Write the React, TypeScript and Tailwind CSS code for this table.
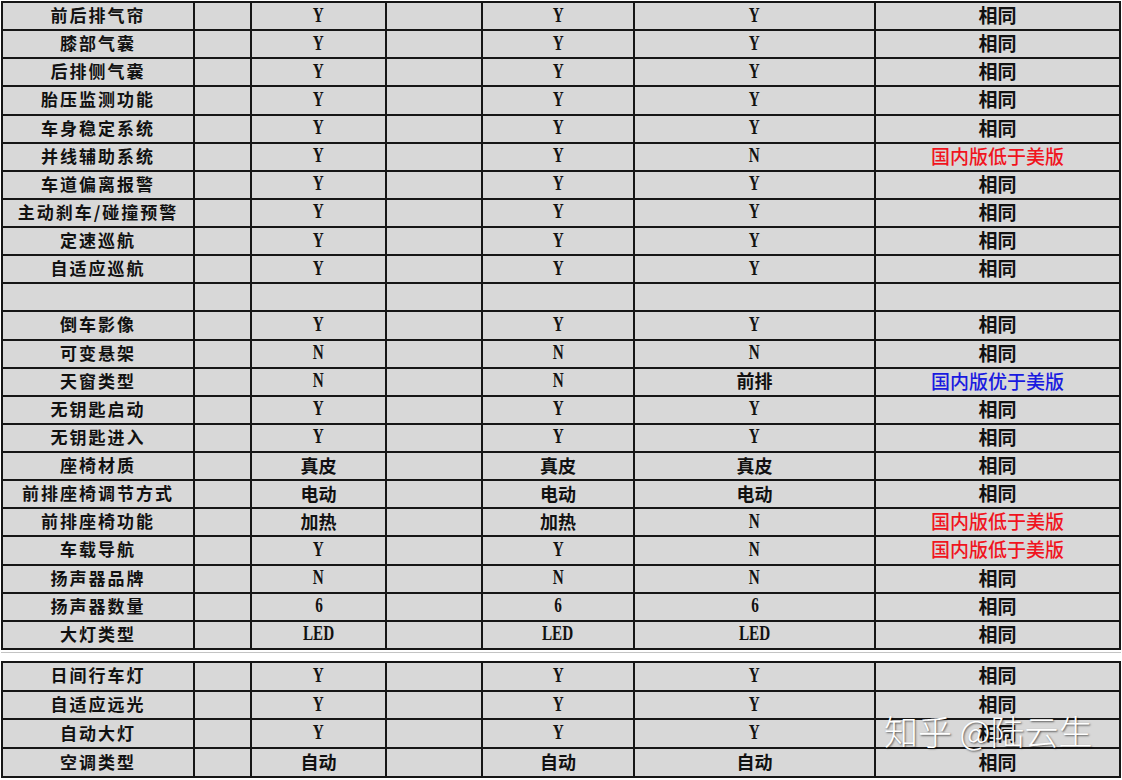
type Row = {
  label: string;
  a: string;
  b: string;
  c: string;
  result: string;
};

const SAME = "相同";
const LOWER = "国内版低于美版";
const HIGHER = "国内版优于美版";

const topRows: (Row | null)[] = [
  { label: "前后排气帘", a: "Y", b: "Y", c: "Y", result: SAME },
  { label: "膝部气囊", a: "Y", b: "Y", c: "Y", result: SAME },
  { label: "后排侧气囊", a: "Y", b: "Y", c: "Y", result: SAME },
  { label: "胎压监测功能", a: "Y", b: "Y", c: "Y", result: SAME },
  { label: "车身稳定系统", a: "Y", b: "Y", c: "Y", result: SAME },
  { label: "并线辅助系统", a: "Y", b: "Y", c: "N", result: LOWER },
  { label: "车道偏离报警", a: "Y", b: "Y", c: "Y", result: SAME },
  { label: "主动刹车/碰撞预警", a: "Y", b: "Y", c: "Y", result: SAME },
  { label: "定速巡航", a: "Y", b: "Y", c: "Y", result: SAME },
  { label: "自适应巡航", a: "Y", b: "Y", c: "Y", result: SAME },
  null,
  { label: "倒车影像", a: "Y", b: "Y", c: "Y", result: SAME },
  { label: "可变悬架", a: "N", b: "N", c: "N", result: SAME },
  { label: "天窗类型", a: "N", b: "N", c: "前排", result: HIGHER },
  { label: "无钥匙启动", a: "Y", b: "Y", c: "Y", result: SAME },
  { label: "无钥匙进入", a: "Y", b: "Y", c: "Y", result: SAME },
  { label: "座椅材质", a: "真皮", b: "真皮", c: "真皮", result: SAME },
  { label: "前排座椅调节方式", a: "电动", b: "电动", c: "电动", result: SAME },
  { label: "前排座椅功能", a: "加热", b: "加热", c: "N", result: LOWER },
  { label: "车载导航", a: "Y", b: "Y", c: "N", result: LOWER },
  { label: "扬声器品牌", a: "N", b: "N", c: "N", result: SAME },
  { label: "扬声器数量", a: "6", b: "6", c: "6", result: SAME },
  { label: "大灯类型", a: "LED", b: "LED", c: "LED", result: SAME },
];

const bottomRows: Row[] = [
  { label: "日间行车灯", a: "Y", b: "Y", c: "Y", result: SAME },
  { label: "自适应远光", a: "Y", b: "Y", c: "Y", result: SAME },
  { label: "自动大灯", a: "Y", b: "Y", c: "Y", result: SAME },
  { label: "空调类型", a: "自动", b: "自动", c: "自动", result: SAME },
];

const cell = "border-r-2 border-b-2 border-[#161616] flex items-center justify-center pb-[3px] leading-none";
const cols = "grid grid-cols-[192px_57px_135px_96px_152px_241px_245px]";
const cjk = "font-['Noto_Sans_CJK_SC',sans-serif]";

function Value({ v }: { v: string }) {
  if (/^[A-Z0-9]+$/.test(v)) {
    return (
      <span className="inline-block scale-x-[0.76] font-['Liberation_Serif',serif] text-[20px] font-bold leading-none text-[#111]">
        {v}
      </span>
    );
  }
  return <span className={`${cjk} text-[18px] font-bold leading-none text-[#111]`}>{v}</span>;
}

function Result({ v }: { v: string }) {
  if (v === LOWER)
    return <span className={`${cjk} text-[19px] font-medium leading-none text-[#f0141e]`}>{v}</span>;
  if (v === HIGHER)
    return <span className={`${cjk} text-[19px] font-medium leading-none text-[#1a1ae0]`}>{v}</span>;
  return <span className={`${cjk} text-[19px] font-bold leading-none text-[#111]`}>{v}</span>;
}

function TableRow({ row, h }: { row: Row | null; h: string }) {
  return (
    <div className={`${cols} ${h}`}>
      <div className={cell}>
        {row && (
          <span className={`${cjk} text-[17px] font-bold leading-none tracking-[2px] text-[#111]`}>{row.label}</span>
        )}
      </div>
      <div className={cell} />
      <div className={cell}>{row && <Value v={row.a} />}</div>
      <div className={cell} />
      <div className={cell}>{row && <Value v={row.b} />}</div>
      <div className={cell}>{row && <Value v={row.c} />}</div>
      <div className={cell}>{row && <Result v={row.result} />}</div>
    </div>
  );
}

export default function App() {
  return (
    <div className="relative w-[1122px] h-[780px] overflow-hidden bg-white pt-[1px] pl-[1px]">
      <div className="w-[1120px] border-l-2 border-t-2 border-[#161616] bg-[#d8d8d8]">
        {topRows.map((r, i) => (
          <TableRow key={i} row={r} h="h-[28.13px]" />
        ))}
      </div>
      <div className="h-[11px] w-[1120px] pt-[2px]">
        <div className="h-[1px] bg-[#c4c4c4]" />
      </div>
      <div className="w-[1120px] border-l-2 border-t-2 border-[#161616] bg-[#d8d8d8]">
        {bottomRows.map((r, i) => (
          <TableRow key={i} row={r} h="h-[28.75px]" />
        ))}
      </div>
      {/* watermark sits over the last rows, as in the screenshot */}
      <div className={`absolute left-[884px] top-[714px] ${cjk} text-[34px] font-light leading-none text-white [text-shadow:1px_1px_2px_rgba(0,0,0,0.6)]`}>
        知乎 @陆云生
      </div>
    </div>
  );
}
